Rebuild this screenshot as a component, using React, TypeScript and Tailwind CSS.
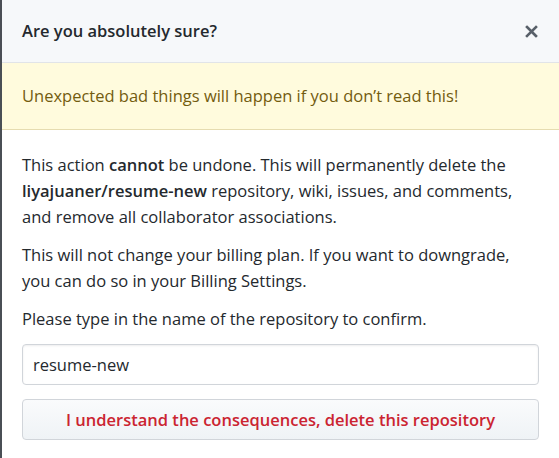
import React from "react";

const App = () => {
  return (
    <div
      className="w-[559px] h-[458px] overflow-hidden bg-white border-l-2 border-[#4a4f55] text-[#24292e]"
      style={{ fontFamily: '"Open Sans", "Noto Sans", sans-serif' }}
    >
      <div className="h-[63px] bg-[#f6f8fa] border-b border-[#e1e4e8] flex items-center justify-between pl-5 pr-[21px]">
        <h3 className="text-[16.5px] font-semibold">Are you absolutely sure?</h3>
        <svg width="13" height="13" viewBox="0 0 13 13" className="text-[#586069]">
          <path
            d="M2 2L11 11M11 2L2 11"
            stroke="currentColor"
            strokeWidth="2.6"
            strokeLinecap="square"
          />
        </svg>
      </div>
      <div className="h-[67px] bg-[#fffbdd] border-b border-[#e6dcb0] text-[#735c0f] text-[16.5px] flex items-center px-5">
        Unexpected bad things will happen if you don’t read this!
      </div>
      <div className="px-5 pt-[22px] text-[16.5px] leading-[26px]">
        <p className="mb-3">
          This action <strong className="font-semibold">cannot</strong> be undone. This will permanently delete the
          <br />
          <strong className="font-semibold">liyajuaner/resume-new</strong> repository, wiki, issues, and comments,
          <br />
          and remove all collaborator associations.
        </p>
        <p className="mb-3">
          This will not change your billing plan. If you want to downgrade,
          <br />
          you can do so in your Billing Settings.
        </p>
        <p className="mb-3">Please type in the name of the repository to confirm.</p>
        <input
          className="w-full h-[41px] border border-[#d1d5da] rounded-[4px] px-[10px] text-[16.5px] text-[#24292e] outline-none shadow-[inset_0_1px_2px_rgba(27,31,35,0.075)]"
          defaultValue="resume-new"
        />
        <button className="mt-[14px] w-full h-[41px] border border-[#d1d5da] rounded-[4px] bg-gradient-to-b from-[#fafbfc] to-[#eff3f6] text-[#cb2431] text-[16.5px] font-semibold">
          I understand the consequences, delete this repository
        </button>
      </div>
    </div>
  );
};

export default App;
